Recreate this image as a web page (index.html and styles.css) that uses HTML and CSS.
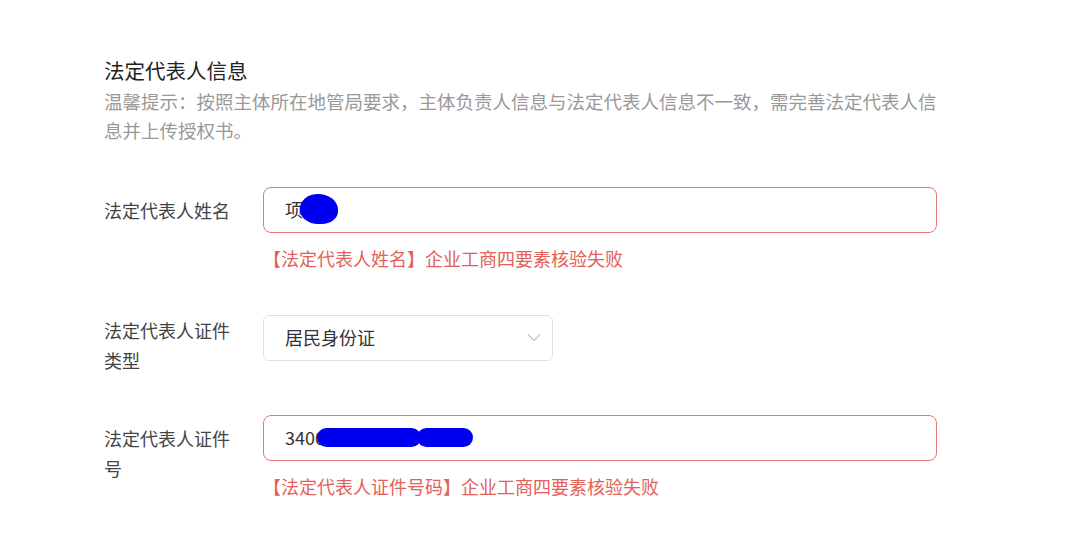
FILE: index.html
```html
<!DOCTYPE html>
<html>

<head>
    <title>法定代表人信息</title>
    <meta charset="UTF-8">

    <link rel="stylesheet" href="styles.css">

</head>

<body>
    <div class="panel">
        <h2 class="panel-title">法定代表人信息</h2>
        <p class="panel-hint">温馨提示：按照主体所在地管局要求，主体负责人信息与法定代表人信息不一致，需完善法定代表人信息并上传授权书。</p>

        <form class="form">
            <div class="form-item">
                <label class="form-label">法定代表人姓名</label>
                <div class="form-field">
                    <div class="input is-error">
                        <span class="input-text">项</span>
                        <span class="blot blot-name"></span>
                    </div>
                    <div class="form-error">【法定代表人姓名】企业工商四要素核验失败</div>
                </div>
            </div>

            <div class="form-item">
                <label class="form-label form-label-top">法定代表人证件类型</label>
                <div class="form-field">
                    <div class="select">
                        <span class="input-text">居民身份证</span>
                        <svg class="select-arrow" width="14" height="9" viewBox="0 0 14 9">
                            <path d="M1 1.5 L7 7.5 L13 1.5" fill="none" stroke="#c4c4c4" stroke-width="1.2" />
                        </svg>
                    </div>
                </div>
            </div>

            <div class="form-item">
                <label class="form-label">法定代表人证件号</label>
                <div class="form-field">
                    <div class="input is-error">
                        <span class="input-text">3400</span>
                        <span class="blot blot-id-a"></span>
                        <span class="blot blot-id-b"></span>
                    </div>
                    <div class="form-error">【法定代表人证件号码】企业工商四要素核验失败</div>
                </div>
            </div>
        </form>
    </div>
</body>

</html>
```

FILE: styles.css
```css
body {
    font-family: "Noto Sans CJK SC", "Noto Sans", sans-serif;
    margin: 0;
    background-color: #fff;
    color: #333;
}

.panel {
    width: 850px;
    padding: 55px 0 0 104px;
}

.panel-title {
    margin: 0;
    font-size: 20.5px;
    font-weight: normal;
    line-height: 30px;
    color: #222;
}

.panel-hint {
    margin: 2px 0 0;
    max-width: 836px;
    font-size: 18.5px;
    line-height: 29px;
    color: #999;
}

.form {
    margin-top: 42px;
}

.form-item {
    display: grid;
    grid-template-columns: 159px 1fr;
    margin-bottom: 54px;
}

.form-label {
    padding: 8px 20px 0 0;
    font-size: 18px;
    line-height: 30px;
    color: #444;
}

.form-label-top {
    padding-top: 0;
    margin-bottom: -14px;
}

.input,
.select {
    display: flex;
    align-items: center;
    box-sizing: border-box;
    height: 46px;
    padding: 0 21px 2px;
    border: 1px solid #e0e0e0;
    border-radius: 8px;
    font-size: 18px;
}

.input {
    width: 674px;
}

.input.is-error {
    border-color: #e07a78;
}

.select {
    width: 290px;
    justify-content: space-between;
    padding-right: 11px;
    border-radius: 6px;
}

.input-text {
    color: #333;
}

.form-error {
    margin: 11px 0 -11px;
    font-size: 18px;
    line-height: 28px;
    color: #e2615a;
}

.blot {
    display: inline-block;
    background-color: #0000f0;
}

.blot-name {
    width: 38px;
    height: 30px;
    margin-left: -3px;
    border-radius: 50% 55% 45% 50%;
}

.blot-id-a {
    width: 104px;
    height: 19px;
    margin-left: -8px;
    border-radius: 10px;
}

.blot-id-b {
    width: 56px;
    height: 19px;
    margin-left: -4px;
    border-radius: 10px;
}
```
